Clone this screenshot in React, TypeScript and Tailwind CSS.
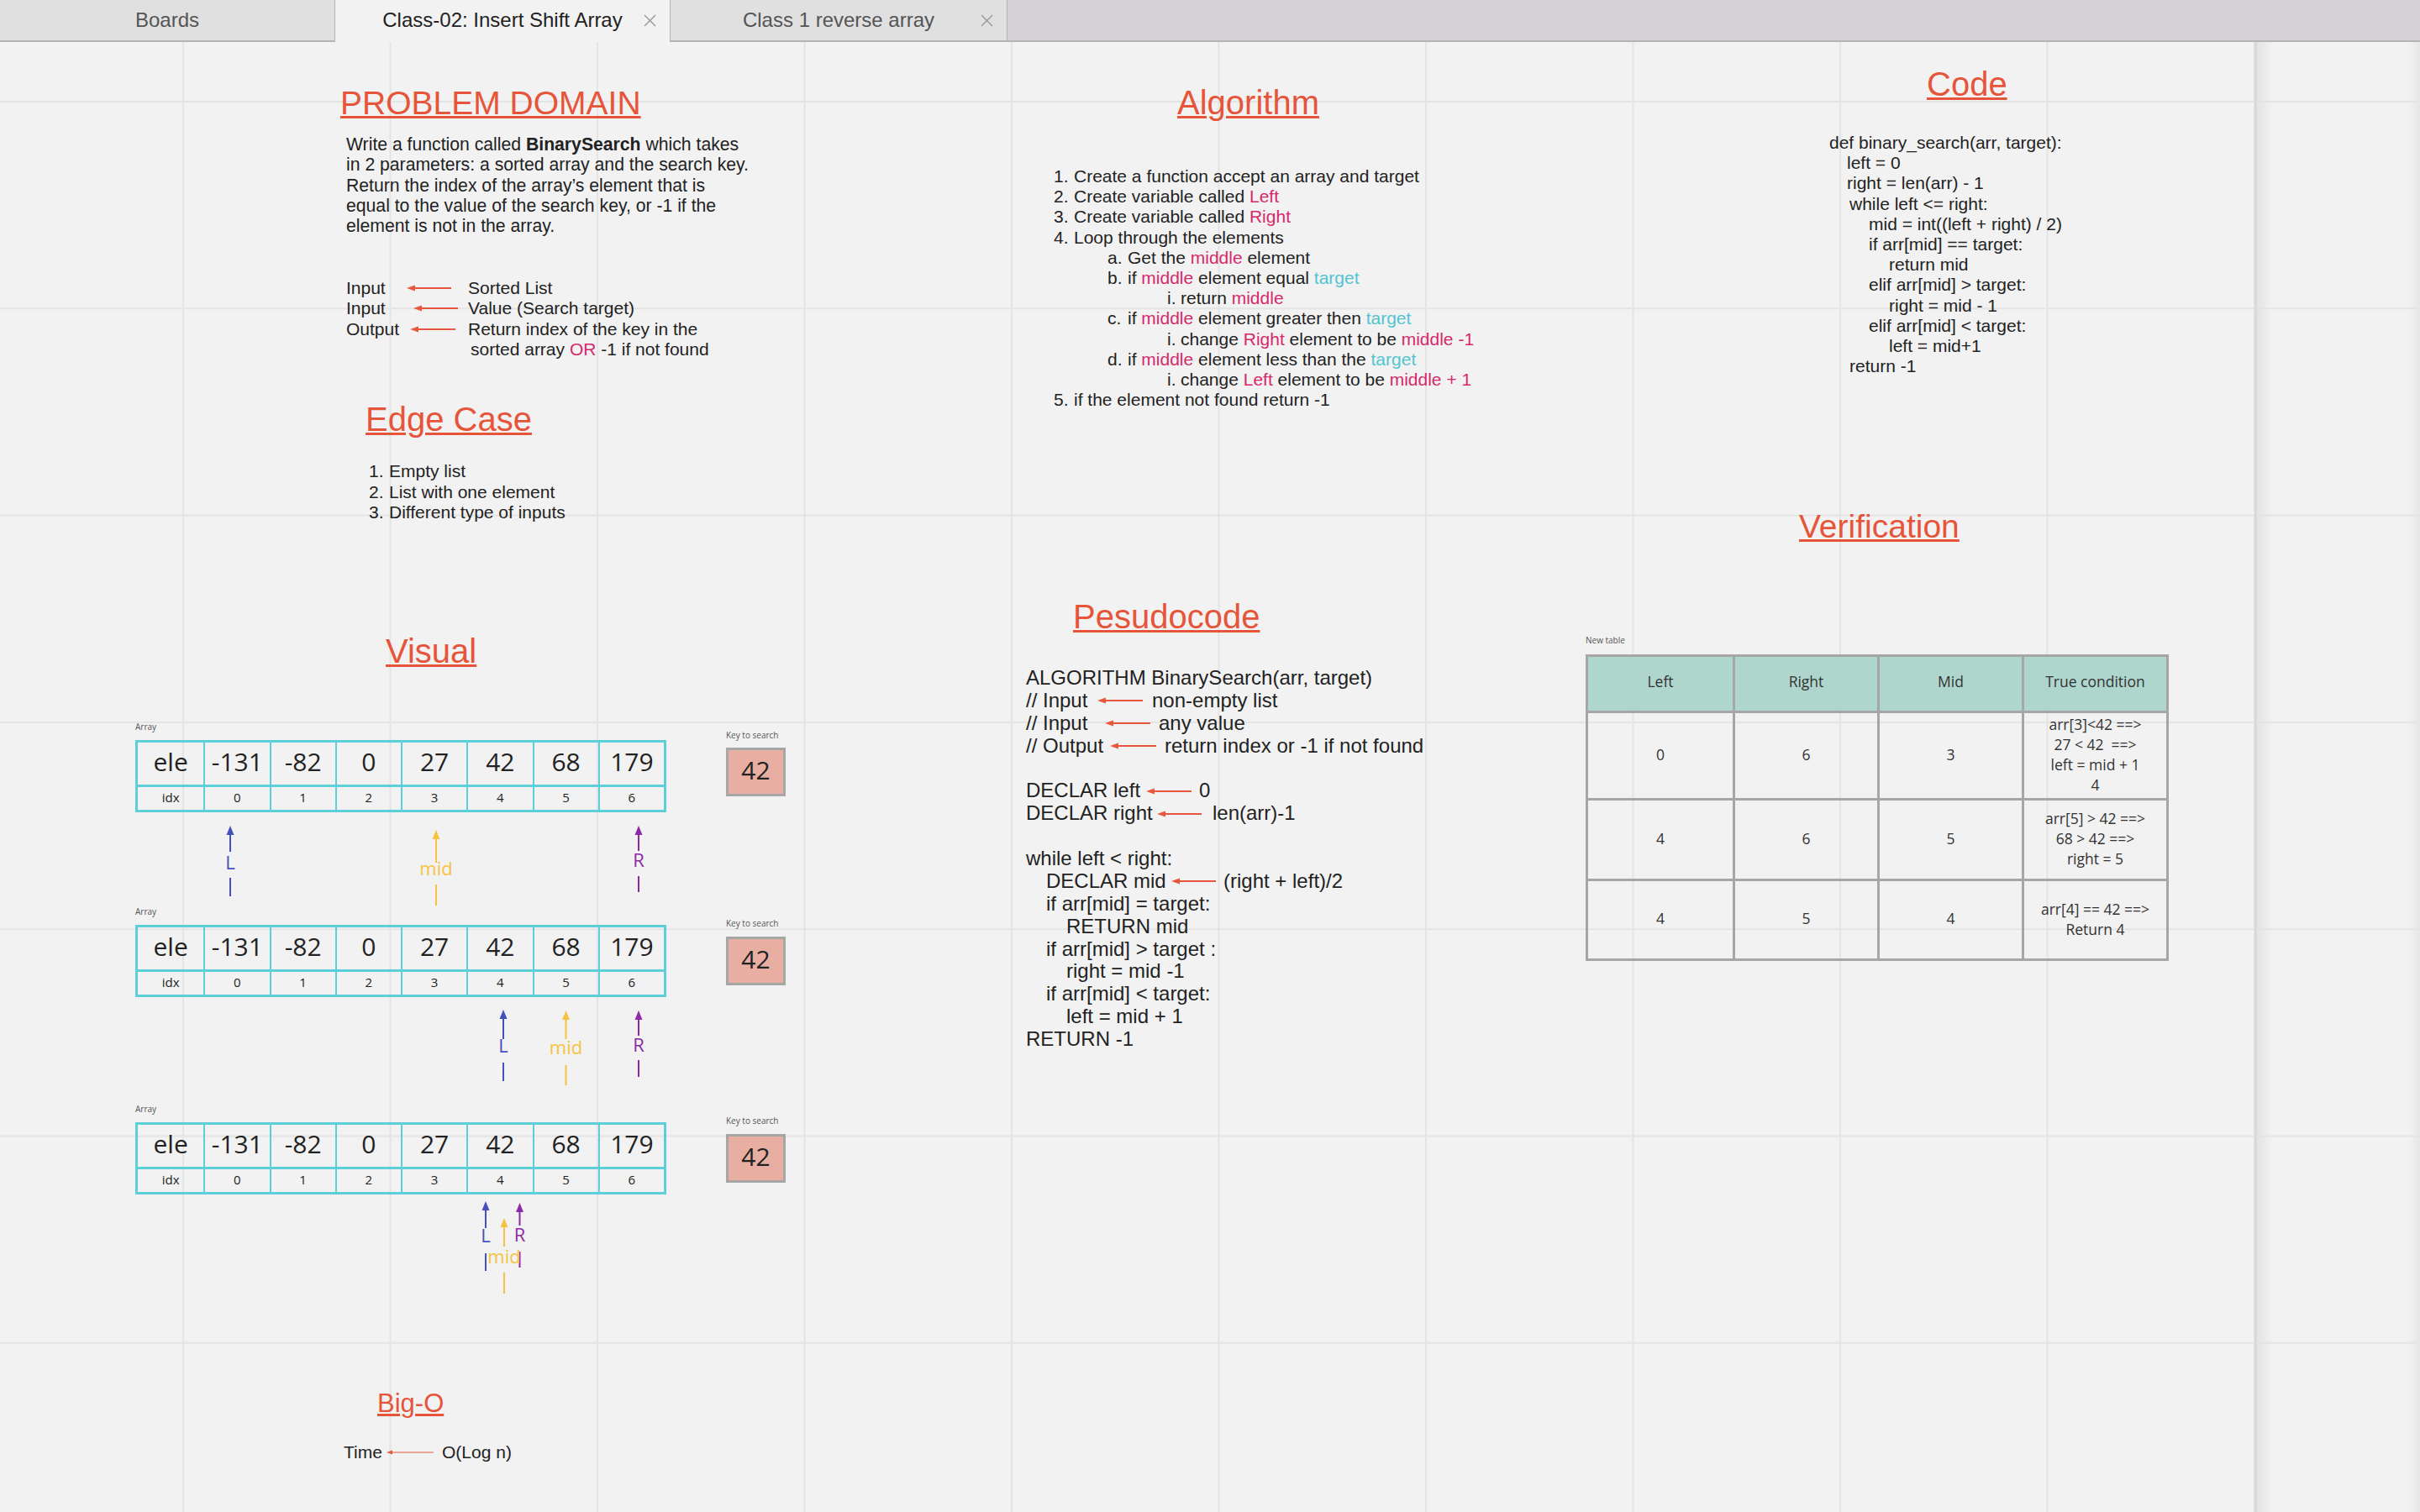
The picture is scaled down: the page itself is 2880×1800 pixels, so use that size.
import React from 'react';

const sans = "font-['Liberation_Sans',Arial,Helvetica,sans-serif]";
const open = "font-['Open_Sans','Liberation_Sans',sans-serif]";

const RED = '#e8573b';

type Seg = [string, ('p' | 'c')?];

function RedArrow({ w, thin = false }: { w: number; thin?: boolean }) {
  const head = thin ? 7 : 10;
  const hh = thin ? 2.5 : 3.5;
  return (
    <svg width={w} height={8} viewBox={`0 0 ${w} 8`} className="shrink-0">
      <path d={`M0 4 L${head} ${4 - hh} L${head} ${4 + hh} Z`} fill={RED} />
      <line x1={head - 2} y1={4} x2={w} y2={4} stroke={RED} strokeWidth={thin ? 1 : 2} />
    </svg>
  );
}

function CloseX() {
  return (
    <svg width={15} height={15} viewBox="0 0 15 15" className="absolute right-[16px] top-[17px]">
      <line x1={1} y1={1} x2={14} y2={14} stroke="#9a9a9a" strokeWidth={1.4} />
      <line x1={14} y1={1} x2={1} y2={14} stroke="#9a9a9a" strokeWidth={1.4} />
    </svg>
  );
}

function Heading({ text, className }: { text: string; className: string }) {
  return (
    <div
      className={`absolute ${sans} leading-none text-[#e6553a] underline decoration-[3px] underline-offset-[2px] whitespace-nowrap ${className}`}
    >
      {text}
    </div>
  );
}

function Segs({ segs }: { segs: Seg[] }) {
  return (
    <>
      {segs.map(([t, c], i) => (
        <span key={i} className={c === 'p' ? 'text-[#d6296b]' : c === 'c' ? 'text-[#52c4d1]' : ''}>
          {t}
        </span>
      ))}
    </>
  );
}

const ioRows = [
  { label: 'Input', lw: 'w-[72px]', aw: 53, gap: 'ml-[20px]', value: 'Sorted List' },
  { label: 'Input', lw: 'w-[80px]', aw: 53, gap: 'ml-[12px]', value: 'Value (Search target)' },
  { label: 'Output', lw: 'w-[76px]', aw: 54, gap: 'ml-[15px]', value: 'Return index of the key in the' },
];

const algoItems: { lvl: number; m: string; segs: Seg[] }[] = [
  { lvl: 0, m: '1.', segs: [['Create a function accept an array and target']] },
  { lvl: 0, m: '2.', segs: [['Create variable called '], ['Left', 'p']] },
  { lvl: 0, m: '3.', segs: [['Create variable called '], ['Right', 'p']] },
  { lvl: 0, m: '4.', segs: [['Loop through the elements']] },
  { lvl: 1, m: 'a.', segs: [['Get the '], ['middle', 'p'], [' element']] },
  { lvl: 1, m: 'b.', segs: [['if '], ['middle', 'p'], [' element equal '], ['target', 'c']] },
  { lvl: 2, m: 'i.', segs: [['return '], ['middle', 'p']] },
  { lvl: 1, m: 'c.', segs: [['if '], ['middle', 'p'], [' element greater then '], ['target', 'c']] },
  { lvl: 2, m: 'i.', segs: [['change '], ['Right', 'p'], [' element to be '], ['middle -1', 'p']] },
  { lvl: 1, m: 'd.', segs: [['if '], ['middle', 'p'], [' element less than the '], ['target', 'c']] },
  { lvl: 2, m: 'i.', segs: [['change '], ['Left', 'p'], [' element to be '], ['middle + 1', 'p']] },
  { lvl: 0, m: '5.', segs: [['if the element not found return -1']] },
];

const lvlPad = ['pl-0', 'pl-[64px]', 'pl-[135px]'];
const lvlMark = ['w-[24px]', 'w-[24px]', 'w-[16px]'];

const codeLines = [
  { pl: 'pl-0', t: 'def binary_search(arr, target):' },
  { pl: 'pl-[21px]', t: 'left = 0' },
  { pl: 'pl-[21px]', t: 'right = len(arr) - 1' },
  { pl: 'pl-[24px]', t: 'while left <= right:' },
  { pl: 'pl-[47px]', t: 'mid = int((left + right) / 2)' },
  { pl: 'pl-[47px]', t: 'if arr[mid] == target:' },
  { pl: 'pl-[71px]', t: 'return mid' },
  { pl: 'pl-[47px]', t: 'elif arr[mid] > target:' },
  { pl: 'pl-[71px]', t: 'right = mid - 1' },
  { pl: 'pl-[47px]', t: 'elif arr[mid] < target:' },
  { pl: 'pl-[71px]', t: 'left = mid+1' },
  { pl: 'pl-[24px]', t: 'return -1' },
];

type PLine =
  | { kind: 'text'; pl: string; t: string }
  | { kind: 'arrow'; pl: string; label: string; lw: string; aw: number; gap: string; value: string }
  | { kind: 'blank' };

const pseudo: PLine[] = [
  { kind: 'text', pl: 'pl-0', t: 'ALGORITHM BinarySearch(arr, target)' },
  { kind: 'arrow', pl: 'pl-0', label: '// Input', lw: 'w-[85px]', aw: 54, gap: 'ml-[11px]', value: 'non-empty list' },
  { kind: 'arrow', pl: 'pl-0', label: '// Input', lw: 'w-[94px]', aw: 54, gap: 'ml-[10px]', value: 'any value' },
  { kind: 'arrow', pl: 'pl-0', label: '// Output', lw: 'w-[100px]', aw: 55, gap: 'ml-[10px]', value: 'return index or -1 if not found' },
  { kind: 'blank' },
  { kind: 'arrow', pl: 'pl-0', label: 'DECLAR left', lw: 'w-[143px]', aw: 54, gap: 'ml-[9px]', value: '0' },
  { kind: 'arrow', pl: 'pl-0', label: 'DECLAR right', lw: 'w-[156px]', aw: 53, gap: 'ml-[13px]', value: 'len(arr)-1' },
  { kind: 'blank' },
  { kind: 'text', pl: 'pl-0', t: 'while left < right:' },
  { kind: 'arrow', pl: 'pl-[24px]', label: 'DECLAR mid', lw: 'w-[149px]', aw: 53, gap: 'ml-[9px]', value: '(right + left)/2' },
  { kind: 'text', pl: 'pl-[24px]', t: 'if arr[mid] = target:' },
  { kind: 'text', pl: 'pl-[48px]', t: 'RETURN mid' },
  { kind: 'text', pl: 'pl-[24px]', t: 'if arr[mid] > target :' },
  { kind: 'text', pl: 'pl-[48px]', t: 'right = mid -1' },
  { kind: 'text', pl: 'pl-[24px]', t: 'if arr[mid] < target:' },
  { kind: 'text', pl: 'pl-[48px]', t: 'left = mid + 1' },
  { kind: 'text', pl: 'pl-0', t: 'RETURN -1' },
];

const elements = ['ele', '-131', '-82', '0', '27', '42', '68', '179'];
const indexes = ['idx', '0', '1', '2', '3', '4', '5', '6'];

const arrays = [
  { label: 'top-[809px]', table: 'top-[831px]', keyLabel: 'top-[819px]', box: 'top-[840px]' },
  { label: 'top-[1029px]', table: 'top-[1051px]', keyLabel: 'top-[1043px]', box: 'top-[1065px]' },
  { label: 'top-[1264px]', table: 'top-[1286px]', keyLabel: 'top-[1278px]', box: 'top-[1300px]' },
];

const BLUE = '#4650bd';
const YELLOW = '#f5c342';
const PURPLE = '#8c2aa6';

const pointers = [
  { x: 274, tip: 933, shaft: 964, l1: 995, l2: 1017, color: BLUE },
  { x: 519, tip: 938, shaft: 977, l1: 1003, l2: 1028, color: YELLOW },
  { x: 760, tip: 933, shaft: 963, l1: 993, l2: 1012, color: PURPLE },
  { x: 599, tip: 1152, shaft: 1187, l1: 1215, l2: 1237, color: BLUE },
  { x: 673.5, tip: 1153, shaft: 1187, l1: 1218, l2: 1242, color: YELLOW },
  { x: 760, tip: 1153, shaft: 1183, l1: 1212, l2: 1232, color: PURPLE },
  { x: 578, tip: 1380, shaft: 1412, l1: 1442, l2: 1463, color: BLUE },
  { x: 600, tip: 1400, shaft: 1434, l1: 1465, l2: 1490, color: YELLOW },
  { x: 618.5, tip: 1382, shaft: 1409, l1: 1440, l2: 1459, color: PURPLE },
];

const pointerLabels = [
  { t: 'L', cls: 'left-[274px] top-[965px] text-[#4650bd]' },
  { t: 'mid', cls: 'left-[519px] top-[972px] text-[#f5c342]' },
  { t: 'R', cls: 'left-[760px] top-[962px] text-[#8c2aa6]' },
  { t: 'L', cls: 'left-[599px] top-[1183px] text-[#4650bd]' },
  { t: 'mid', cls: 'left-[673.5px] top-[1185px] text-[#f5c342]' },
  { t: 'R', cls: 'left-[760px] top-[1182px] text-[#8c2aa6]' },
  { t: 'L', cls: 'left-[578px] top-[1409px] text-[#4650bd]' },
  { t: 'mid', cls: 'left-[600px] top-[1434px] text-[#f5c342]' },
  { t: 'R', cls: 'left-[618.5px] top-[1408px] text-[#8c2aa6]' },
];

const verifyRows = [
  { h: 'h-[104px]', vals: ['0', '6', '3'], cond: ['arr[3]<42 ==>', '27 < 42  ==>', 'left = mid + 1', '4'] },
  { h: 'h-[96px]', vals: ['4', '6', '5'], cond: ['arr[5] > 42 ==>', '68 > 42 ==>', 'right = 5'] },
  { h: 'h-[95px]', vals: ['4', '5', '4'], cond: ['arr[4] == 42 ==>', 'Return 4'] },
];

function ArrayTable({ a }: { a: (typeof arrays)[number] }) {
  return (
    <>
      <div className={`absolute left-[161px] ${a.label} ${open} text-[10px] leading-[12px] text-[#555]`}>Array</div>
      <div className={`absolute left-[161px] ${a.table} w-[632px] border-[3px] border-[#5ccfd8] ${open} text-[#222]`}>
        <div className="grid grid-cols-8 h-[50px]">
          {elements.map((e, i) => (
            <div
              key={i}
              className={`flex items-center justify-center pb-[6px] text-[30px] ${i > 0 ? 'border-l-2 border-[#5ccfd8]' : ''}`}
            >
              {e}
            </div>
          ))}
        </div>
        <div className="grid grid-cols-8 h-[30px] border-t-[3px] border-[#5ccfd8]">
          {indexes.map((e, i) => (
            <div
              key={i}
              className={`flex items-center justify-center pb-[2px] text-[15px] ${i > 0 ? 'border-l-2 border-[#5ccfd8]' : ''}`}
            >
              {e}
            </div>
          ))}
        </div>
      </div>
      <div className={`absolute left-[864px] ${a.keyLabel} ${open} text-[10px] leading-[12px] text-[#555] whitespace-nowrap`}>
        Key to search
      </div>
      <div
        className={`absolute left-[864px] ${a.box} w-[71px] h-[58px] pb-[5px] bg-[#e8aea2] border-[3px] border-[#a6a6a6] flex items-center justify-center ${open} text-[30px] text-[#222]`}
      >
        42
      </div>
    </>
  );
}

export default function App() {
  return (
    <div className={`w-[2880px] h-[1800px] overflow-hidden flex flex-col bg-[#f2f2f2] ${sans} text-[#222]`}>
      {/* tab bar */}
      <div className="flex h-[50px] shrink-0 text-[24px]">
        <div className="w-[399px] h-full bg-[#e0e0e0] border-b-2 border-r border-[#b4b4b4] flex items-center justify-center text-[#555]">
          Boards
        </div>
        <div className="relative w-[399px] h-full pb-[2px] bg-[#f2f2f2] border-r border-[#b4b4b4] flex items-center justify-center text-[#222]">
          Class-02: Insert Shift Array
          <CloseX />
        </div>
        <div className="relative w-[401px] h-full bg-[#e0e0e0] border-b-2 border-r border-[#b4b4b4] flex items-center justify-center text-[#555]">
          Class 1 reverse array
          <CloseX />
        </div>
        <div className="flex-1 h-full bg-[#d4d2d5] border-b-2 border-[#b4b4b4]" />
      </div>

      {/* board canvas */}
      <div className="relative flex-1 bg-[#f2f2f2] bg-[linear-gradient(to_right,#e4e4e4_2px,transparent_2px),linear-gradient(to_bottom,#e4e4e4_2px,transparent_2px)] bg-[length:246.5px_246.3px] bg-[position:217px_70px]">
        {/* Problem domain */}
        <Heading text="PROBLEM DOMAIN" className="left-[405px] top-[53px] text-[39px]" />
        <div className="absolute left-[412px] top-[110px] text-[21.2px] leading-[24.3px] whitespace-nowrap">
          Write a function called <b>BinarySearch</b> which takes
          <br />
          in 2 parameters: a sorted array and the search key.
          <br />
          Return the index of the array’s element that is
          <br />
          equal to the value of the search key, or -1 if the
          <br />
          element is not in the array.
        </div>
        <div className="absolute left-[412px] top-[281px] text-[21px] leading-[24.3px] whitespace-nowrap">
          {ioRows.map((r, i) => (
            <div key={i} className="flex items-center h-[24.3px]">
              <span className={`${r.lw} shrink-0`}>{r.label}</span>
              <RedArrow w={r.aw} />
              <span className={r.gap}>{r.value}</span>
            </div>
          ))}
          <div className="pl-[148px] h-[24.3px]">
            sorted array <span className="text-[#d6296b]">OR</span> -1 if not found
          </div>
        </div>

        {/* Edge case */}
        <Heading text="Edge Case" className="left-[435px] top-[429px] text-[40px]" />
        <div className="absolute left-[439px] top-[499px] text-[21px] leading-[24.5px] whitespace-nowrap">
          {['Empty list', 'List with one element', 'Different type of inputs'].map((t, i) => (
            <div key={i} className="flex">
              <span className="w-[24px] shrink-0">{i + 1}.</span>
              <span>{t}</span>
            </div>
          ))}
        </div>

        {/* Algorithm */}
        <Heading text="Algorithm" className="left-[1401px] top-[52px] text-[40px]" />
        <div className="absolute left-[1254px] top-[148px] text-[21px] leading-[24.2px] whitespace-nowrap">
          {algoItems.map((it, i) => (
            <div key={i} className={`flex ${lvlPad[it.lvl]}`}>
              <span className={`${lvlMark[it.lvl]} shrink-0`}>{it.m}</span>
              <span>
                <Segs segs={it.segs} />
              </span>
            </div>
          ))}
        </div>

        {/* Code */}
        <Heading text="Code" className="left-[2293px] top-[30px] text-[40px]" />
        <div className="absolute left-[2177px] top-[108px] text-[21px] leading-[24.2px] whitespace-nowrap">
          {codeLines.map((l, i) => (
            <div key={i} className={l.pl}>
              {l.t}
            </div>
          ))}
        </div>

        {/* Pseudocode */}
        <Heading text="Pesudocode" className="left-[1277px] top-[664px] text-[40px]" />
        <div className="absolute left-[1221px] top-[744px] text-[24px] leading-[26.875px] whitespace-nowrap">
          {pseudo.map((l, i) =>
            l.kind === 'blank' ? (
              <div key={i} className="h-[26.875px]" />
            ) : l.kind === 'text' ? (
              <div key={i} className={l.pl}>
                {l.t}
              </div>
            ) : (
              <div key={i} className={`flex items-center h-[26.875px] ${l.pl}`}>
                <span className={`${l.lw} shrink-0`}>{l.label}</span>
                <RedArrow w={l.aw} />
                <span className={l.gap}>{l.value}</span>
              </div>
            )
          )}
        </div>

        {/* Verification */}
        <Heading text="Verification" className="left-[2141px] top-[557px] text-[39px]" />
        <div className={`absolute left-[1887px] top-[706px] ${open} text-[10px] leading-[12px] text-[#555]`}>New table</div>
        <div className={`absolute left-[1887px] top-[729px] w-[694px] border-[3px] border-[#a6a6a6] ${open} text-[17.5px] text-[#333]`}>
          <div className="grid grid-cols-4 h-[64px] bg-[#a6d3c9]/90">
            {['Left', 'Right', 'Mid', 'True condition'].map((h, i) => (
              <div key={h} className={`flex items-center justify-center pb-[6px] ${i > 0 ? 'border-l-[3px] border-[#a6a6a6]' : ''}`}>
                {h}
              </div>
            ))}
          </div>
          {verifyRows.map((r, ri) => (
            <div key={ri} className={`grid grid-cols-4 ${r.h} border-t-[3px] border-[#a6a6a6]`}>
              {r.vals.map((v, i) => (
                <div key={i} className={`flex items-center justify-center pb-[3px] ${i > 0 ? 'border-l-[3px] border-[#a6a6a6]' : ''}`}>
                  {v}
                </div>
              ))}
              <div className="flex flex-col items-center justify-center pb-[3px] border-l-[3px] border-[#a6a6a6] leading-[24px]">
                {r.cond.map((c, i) => (
                  <div key={i} className="whitespace-pre">
                    {c}
                  </div>
                ))}
              </div>
            </div>
          ))}
        </div>

        {/* Visual */}
        <Heading text="Visual" className="left-[459px] top-[705px] text-[40px]" />
        {arrays.map((a, i) => (
          <ArrayTable key={i} a={a} />
        ))}
        <svg width={1000} height={1600} className="absolute left-0 top-0 pointer-events-none">
          {pointers.map((p, i) => (
            <g key={i}>
              <path d={`M${p.x} ${p.tip} L${p.x - 4.5} ${p.tip + 11} L${p.x + 4.5} ${p.tip + 11} Z`} fill={p.color} />
              <line x1={p.x} y1={p.tip + 8} x2={p.x} y2={p.shaft} stroke={p.color} strokeWidth={2} />
              <line x1={p.x} y1={p.l1} x2={p.x} y2={p.l2} stroke={p.color} strokeWidth={2} />
            </g>
          ))}
        </svg>
        {pointerLabels.map((l, i) => (
          <span key={i} className={`absolute -translate-x-1/2 ${open} text-[22px] leading-[22px] ${l.cls}`}>
            {l.t}
          </span>
        ))}

        {/* Big-O */}
        <Heading text="Big-O" className="left-[449px] top-[1605px] text-[31px]" />
        <div className="absolute left-[409px] top-[1667px] flex items-center text-[21px] leading-[24.3px] whitespace-nowrap">
          <span className="w-[51px] shrink-0">Time</span>
          <RedArrow w={56} thin />
          <span className="ml-[10px]">O(Log n)</span>
        </div>

        {/* right edge of board */}
        <div className="absolute left-[2683px] top-0 bottom-0 w-[3px] bg-[#d9d9d9]" />
        <div className="absolute left-[2686px] top-0 bottom-0 w-[18px] bg-gradient-to-r from-[#e3e3e3] to-transparent" />
        <div className="absolute right-0 top-0 bottom-0 w-[14px] bg-gradient-to-r from-transparent to-[#e6e6e6]" />
      </div>
    </div>
  );
}
